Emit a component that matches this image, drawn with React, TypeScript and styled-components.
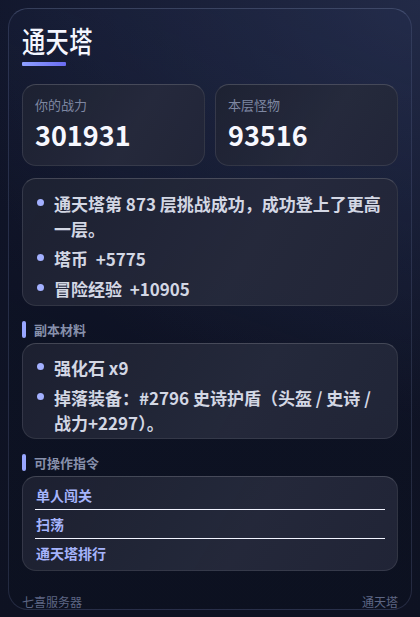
import React from "react";
import styled, { createGlobalStyle } from "styled-components";

const Global = createGlobalStyle`
  html, body {
    margin: 0;
    padding: 0;
    min-height: 100%;
  }
  body {
    background:
      radial-gradient(ellipse 480px 420px at 100% 0%, #222a47 0%, rgba(34,42,71,0.55) 45%, rgba(15,19,34,0) 100%),
      linear-gradient(180deg, #10152a 0%, #0e1222 100%);
    background-color: #0f1322;
    min-height: 617px;
    font-family: "Noto Sans CJK SC", "Noto Sans", sans-serif;
  }
`;

const Page = styled.div`
  padding: 8px 8px 9px;
  box-sizing: border-box;
`;

const Panel = styled.div`
  border: 1px solid rgba(120, 134, 180, 0.22);
  border-top-color: rgba(140, 155, 200, 0.3);
  border-radius: 20px;
  padding: 14px 13px 0;
  display: flex;
  flex-direction: column;
  background: linear-gradient(200deg, rgba(40, 50, 85, 0.25) 0%, rgba(10, 14, 28, 0.15) 60%);
`;

const Title = styled.h1`
  margin: 0;
  font-size: 29px;
  line-height: 34px;
  font-weight: 500;
  color: #f4f6ff;
  transform: scaleX(0.8);
  transform-origin: left center;
  letter-spacing: 0.5px;
`;

const Underline = styled.div`
  width: 44px;
  height: 4px;
  margin-top: 5px;
  border-radius: 1px;
  background: linear-gradient(90deg, #8fa0ff 0%, #6a6cf2 100%);
`;

const StatGrid = styled.div`
  margin-top: 18px;
  display: grid;
  grid-template-columns: 1fr 1fr;
  gap: 10px;
`;

const Card = styled.div`
  border: 1px solid rgba(255, 255, 255, 0.09);
  border-top-color: rgba(255, 255, 255, 0.16);
  border-radius: 14px;
  background: linear-gradient(120deg, rgba(30, 34, 50, 0.9) 0%, rgba(38, 42, 60, 0.95) 60%, rgba(34, 38, 56, 0.95) 100%);
  box-sizing: border-box;
`;

const StatCard = styled(Card)`
  padding: 11px 12px 13px;
  display: flex;
  flex-direction: column;
  gap: 4px;
`;

const StatLabel = styled.div`
  font-size: 13px;
  line-height: 18px;
  color: #7e87a2;
`;

const StatValue = styled.div`
  font-size: 27px;
  line-height: 34px;
  font-weight: 700;
  color: #f7f8ff;
`;

const ListCard = styled(Card)<{ $mt: number }>`
  margin-top: ${(p) => p.$mt}px;
  padding: ${(p) => (p.$mt > 8 ? "12px 12px 4px 14px" : "11px 12px 3px 14px")};
`;

const List = styled.ul`
  list-style: none;
  margin: 0;
  padding: 0;
  display: flex;
  flex-direction: column;
  gap: 5px;
`;

const Item = styled.li`
  display: flex;
  gap: 10px;
  font-size: 17px;
  line-height: 25px;
  font-weight: 700;
  color: #d3d7e4;
`;

const Dot = styled.span`
  flex: none;
  width: 7px;
  height: 7px;
  border-radius: 50%;
  background: #a3b0ff;
  margin-top: 8px;
`;

const SectionHead = styled.div`
  margin-top: 15px;
  display: flex;
  align-items: center;
  gap: 8px;
`;

const HeadBar = styled.span`
  width: 4px;
  height: 17px;
  border-radius: 2px;
  background: #98a6ff;
`;

const HeadText = styled.span`
  font-size: 13px;
  line-height: 17px;
  font-weight: 700;
  color: #8790ab;
`;

const CommandCard = styled(Card)`
  margin-top: 5px;
  padding: 4px 12px 3px;
  display: flex;
  flex-direction: column;
`;

const Command = styled.div<{ $last?: boolean }>`
  font-size: 14px;
  line-height: 20px;
  font-weight: 700;
  color: #a5b3fb;
  padding: 4px 1px;
  border-bottom: ${(p) => (p.$last ? "none" : "1px solid #f2f4ff")};
`;

const Footer = styled.div`
  margin-top: 24px;
  display: flex;
  justify-content: space-between;
  font-size: 12px;
  line-height: 14px;
  color: #5d6684;
`;

export default function App() {
  return (
    <>
      <Global />
      <Page>
        <Panel>
          <Title>通天塔</Title>
          <Underline />
          <StatGrid>
            <StatCard>
              <StatLabel>你的战力</StatLabel>
              <StatValue>301931</StatValue>
            </StatCard>
            <StatCard>
              <StatLabel>本层怪物</StatLabel>
              <StatValue>93516</StatValue>
            </StatCard>
          </StatGrid>

          <ListCard $mt={12}>
            <List>
              <Item>
                <Dot />
                <span>通天塔第 873 层挑战成功，成功登上了更高一层。</span>
              </Item>
              <Item>
                <Dot />
                <span>塔币 &nbsp;+5775</span>
              </Item>
              <Item>
                <Dot />
                <span>冒险经验 &nbsp;+10905</span>
              </Item>
            </List>
          </ListCard>

          <SectionHead>
            <HeadBar />
            <HeadText>副本材料</HeadText>
          </SectionHead>
          <ListCard $mt={5}>
            <List>
              <Item>
                <Dot />
                <span>强化石 x9</span>
              </Item>
              <Item>
                <Dot />
                <span>掉落装备：#2796 史诗护盾（头盔 / 史诗 / 战力+2297）。</span>
              </Item>
            </List>
          </ListCard>

          <SectionHead>
            <HeadBar />
            <HeadText>可操作指令</HeadText>
          </SectionHead>
          <CommandCard>
            <Command>单人闯关</Command>
            <Command>扫荡</Command>
            <Command $last>通天塔排行</Command>
          </CommandCard>

          <Footer>
            <span>七喜服务器</span>
            <span>通天塔</span>
          </Footer>
        </Panel>
      </Page>
    </>
  );
}
